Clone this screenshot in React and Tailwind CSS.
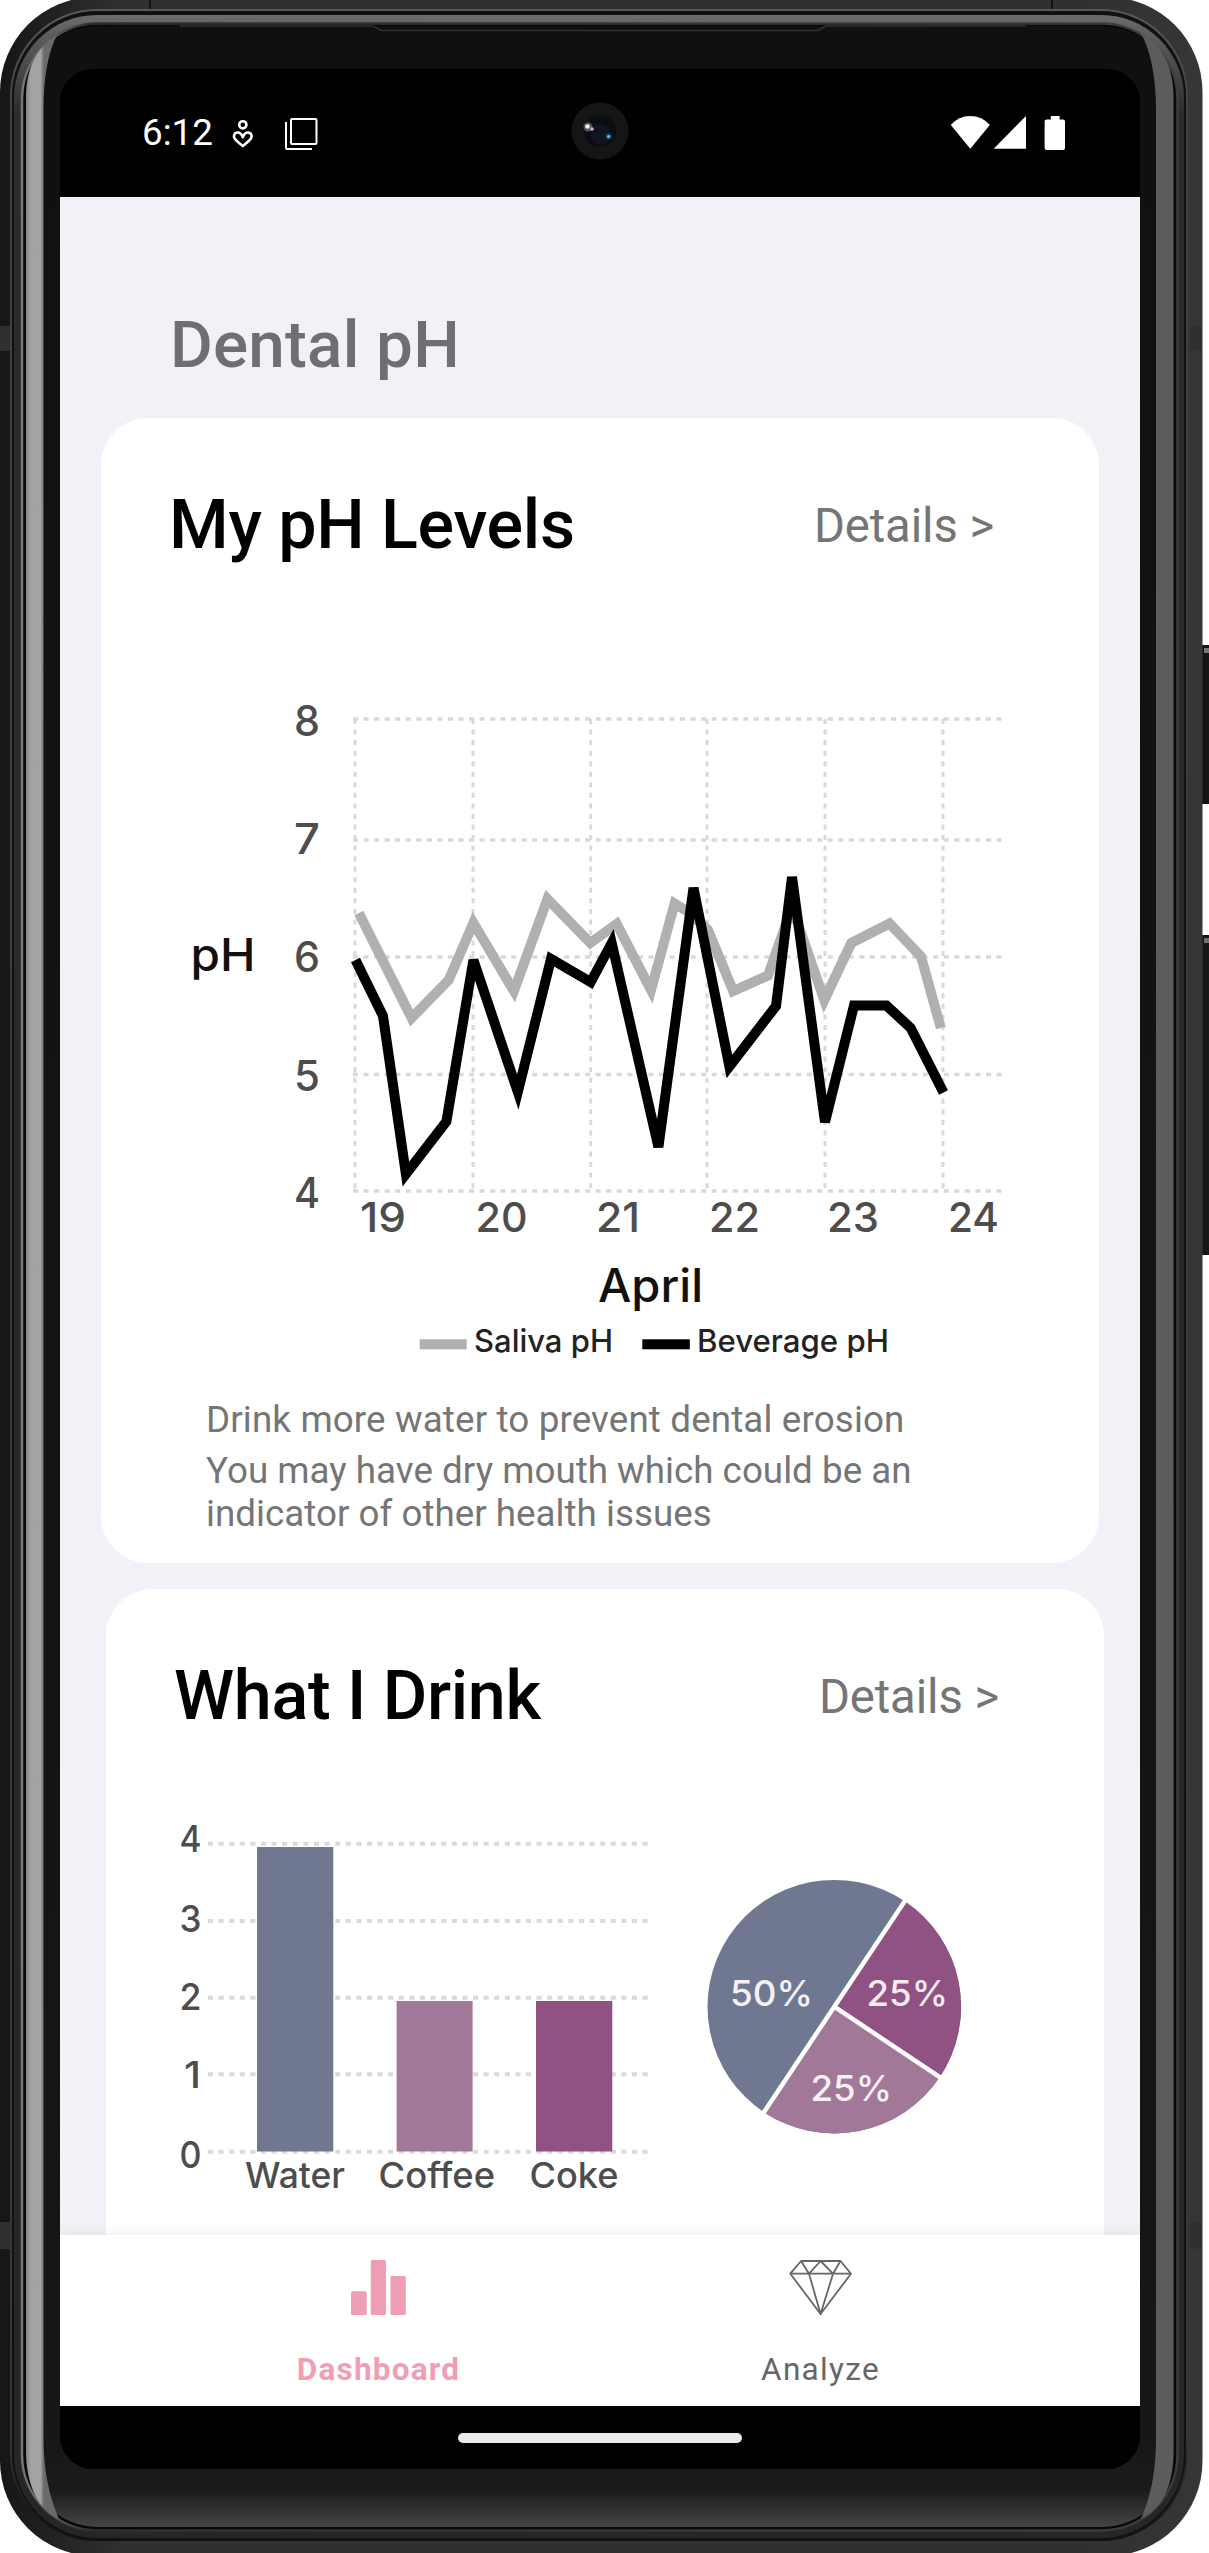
import React from "react";

const SALIVA =
  "358.8,913 411.6,1018 448.7,980 473.4,923 513.9,991 547.5,899 590.3,943 616.7,924 651,990 674.6,903.5 690,913 708,930 733.2,991 768,975.5 792,907 824.3,1000 851.3,943 889.5,923.5 921,956.5 940.8,1028";
const BEVERAGE =
  "355.5,960 383,1016 405.9,1174 446.4,1121.5 473.4,960 517.8,1092 551,959 590.7,982 611.7,943 658.4,1147 693.5,888 729.4,1066.5 776,1006 792,877 825,1122 854,1005.5 886.4,1005.5 910.7,1028 943.5,1092.5";

function Label({ x, y, w, size, fill, weight = 450, children }) {
  return (
    <text
      x={x}
      y={y}
      textLength={w}
      lengthAdjust="spacingAndGlyphs"
      fontSize={size}
      fill={fill}
      fontWeight={weight}
      fontFamily="Inter, sans-serif"
    >
      {children}
    </text>
  );
}

function PhoneBody() {
  return (
    <svg className="absolute inset-0" width="1209" height="2553" viewBox="0 0 1209 2553" fill="none" aria-hidden="true">
      <defs>
        <linearGradient id="shell" x1="0" x2="1" y1="0" y2="0">
          <stop offset="0" stopColor="#161616" />
          <stop offset="0.02" stopColor="#1b1b1b" />
          <stop offset="0.1" stopColor="#303030" />
          <stop offset="0.9" stopColor="#303030" />
          <stop offset="1" stopColor="#363636" />
        </linearGradient>
        <linearGradient id="rim" x1="0" x2="0" y1="0" y2="1">
          <stop offset="0" stopColor="#585858" />
          <stop offset="0.04" stopColor="#404040" />
          <stop offset="0.96" stopColor="#363636" />
          <stop offset="1" stopColor="#101010" />
        </linearGradient>
        <linearGradient id="ring" x1="0" x2="0" y1="0" y2="1">
          <stop offset="0" stopColor="#6c6c6c" />
          <stop offset="0.006" stopColor="#606060" />
          <stop offset="0.04" stopColor="#2b2b2b" />
          <stop offset="1" stopColor="#262626" />
        </linearGradient>
        <linearGradient id="edge" x1="0" x2="1" y1="0" y2="0">
          <stop offset="0" stopColor="#777" />
          <stop offset="0.06" stopColor="#2e2e2e" />
          <stop offset="1" stopColor="#3d3d3d" />
        </linearGradient>
        <linearGradient id="glass" x1="0" x2="0" y1="25" y2="2528" gradientUnits="userSpaceOnUse">
          <stop offset="0" stopColor="#101010" />
          <stop offset="0.96" stopColor="#161616" />
          <stop offset="0.985" stopColor="#1b1b1b" />
          <stop offset="1" stopColor="#464646" />
        </linearGradient>
        <linearGradient id="glareL" x1="26" x2="44" y1="0" y2="0" gradientUnits="userSpaceOnUse">
          <stop offset="0" stopColor="#858585" />
          <stop offset="0.25" stopColor="#a2a2a2" />
          <stop offset="0.8" stopColor="#a4a4a4" />
          <stop offset="1" stopColor="#6a6a6a" />
        </linearGradient>
      </defs>
      <rect x="1198" y="645" width="14" height="159" rx="3" fill="#151515" />
      <rect x="1204" y="648" width="5" height="5" fill="#777" />
      <rect x="1198" y="935" width="14" height="320" rx="3" fill="#171717" />
      <rect x="1204" y="938" width="5" height="5" fill="#707070" />
      <rect x="0" y="-3" width="1202.5" height="2559" rx="95" fill="url(#shell)" />
      <path d="M0 326h11v25H0zM1190 326h12v25h-12zM0 2222h11v27H0zM1190 2222h12v27h-12z" fill="#303030" />
      <path d="M150 0v9M1052 0v11" stroke="#141414" strokeWidth="2" />
      <rect x="11" y="10" width="1176" height="2530" rx="86" fill="#111" stroke="url(#rim)" strokeWidth="2" />
      <rect x="14" y="15" width="1170" height="2523" rx="83" fill="url(#ring)" />
      <rect x="22" y="23.5" width="1155.5" height="2507" rx="76" fill="#080808" stroke="url(#edge)" strokeWidth="2.5" />
      <rect x="26" y="26" width="1148" height="2501" rx="72" fill="url(#glass)" />
      <path
        d="M57 35C36 47 26 70 26 98V2450C26 2482 36 2508 59 2519C49 2496 43.500 2470 43.500 2438V110C43.500 78 48 52 57 35Z"
        fill="url(#glareL)"
      />
      <path
        d="M1141 33C1163 45 1173.500 68 1173.500 96V2450C1173.500 2482 1165 2508 1141 2519C1151 2496 1156 2470 1156 2438V110C1156 78 1151 52 1141 33Z"
        fill="#5c5c5c"
      />
      <path d="M180 26H373l8 4.500H818l8-4.500h200" stroke="#303030" strokeWidth="1.500" />
    </svg>
  );
}

function StatusBar() {
  return (
    <div className="relative flex h-[128px] items-start bg-black pl-[82px] text-white">
      <span className="mt-[46px] w-[72px] text-[36.75px] leading-none whitespace-nowrap">6:12</span>
      <svg className="mt-[49px] ml-[16px] shrink-0" width="26" height="32" viewBox="230 118 26 32" fill="none" stroke="#fff" strokeWidth="2.600">
        <circle cx="242.800" cy="124.800" r="3.600" />
        <path d="M242.800 137.200C241 132.600 238.500 132.300 237 132.600C233.800 133.200 233.200 136.400 234.800 138.800C236.500 141.300 239.500 143.200 242.800 145.900C246.100 143.200 249.100 141.300 250.800 138.800C252.400 136.400 251.800 133.200 248.600 132.600C247.100 132.300 244.600 132.600 242.800 137.200Z" strokeLinejoin="round" />
      </svg>
      <svg className="mt-[47px] ml-[27px] shrink-0" width="36" height="36" viewBox="283 116 36 36" fill="none" stroke="#fff" strokeWidth="2">
        <rect x="291" y="119" width="25.500" height="25" rx="1" />
        <path d="M286 122v26a1 1 0 0 0 1 1h25" />
      </svg>
      <svg className="absolute top-[33px] left-[511px]" width="58" height="58" viewBox="571 102 58 58" aria-hidden="true">
        <circle cx="600" cy="131" r="28.500" fill="#151515" />
        <circle cx="600" cy="131" r="16" fill="#0b0d14" />
        <circle cx="601" cy="134" r="10" fill="#11151f" />
        <circle cx="588" cy="127" r="4.500" fill="#4e565c" />
        <circle cx="587.500" cy="126.500" r="2.200" fill="#f0fff0" />
        <circle cx="592" cy="129" r="1.800" fill="#d9a0d8" />
        <circle cx="608.600" cy="136.500" r="3.500" fill="#0d3055" />
        <circle cx="608.600" cy="136.500" r="1.700" fill="#5ab4f5" />
      </svg>
      <svg className="mt-[45px] ml-auto mr-[73px] shrink-0" width="118" height="38" viewBox="949 114 118 38" fill="#fff">
        <path d="M970.300 148.700L950.800 125Q958.500 116 970.300 116T989.800 125Z" />
        <path d="M993.700 148.700H1026V116Z" />
        <path d="M1050.800 116h8.800v3.500h3.400a2 2 0 0 1 2 2v26.500a2 2 0 0 1-2 2h-16.400a2 2 0 0 1-2-2v-26.500a2 2 0 0 1 2-2h4.200z" />
      </svg>
    </div>
  );
}

function CardHeader({ title }) {
  return (
    <div className="flex h-[142px] items-start justify-between pt-[73px] pr-[105px] pl-[68px]">
      <h2 className="text-[68.25px] leading-none font-medium tracking-[-0.3px] whitespace-nowrap text-black">{title}</h2>
      <span className="mt-[12px] text-[47.25px] leading-none tracking-[-0.1px] whitespace-nowrap text-[#757575]">Details &gt;</span>
    </div>
  );
}

function LevelsChart() {
  const rows = [
    ["8", 719, 736],
    ["7", 840, 854],
    ["6", 957, 971.5],
    ["5", 1074.5, 1090.5],
    ["4", 1191, 1208],
  ];
  const cols = [
    ["19", 355, 360, 46],
    ["20", 473, 475.5, 52],
    ["21", 590.7, 596, 44],
    ["22", 707, 709, 51],
    ["23", 825, 827, 52],
    ["24", 943, 948, 51],
  ];
  return (
    <svg className="mt-[120px] block" width="998" height="700" viewBox="101 680 998 700" fill="none">
      <g stroke="#d9d9d9" strokeWidth="3.500" strokeDasharray="5 5.550">
        {rows.map(([n, y]) => (
          <path key={n} d={`M353 ${y}H1005`} />
        ))}
        {cols.map(([n, x]) => (
          <path key={n} d={`M${x} 719V1193`} strokeWidth="3" />
        ))}
      </g>
      {rows.map(([n, , y]) => (
        <Label key={n} x={294} y={y} w={26} size={42} fill="#4d4d4d">{n}</Label>
      ))}
      {cols.map(([n, , x, w]) => (
        <Label key={n} x={x} y={1231.5} w={w} size={41.5} fill="#4d4d4d">{n}</Label>
      ))}
      <polyline points={SALIVA} stroke="#b0b0b0" strokeWidth="10" />
      <polyline points={BEVERAGE} stroke="#000" strokeWidth="10" />
      <Label x={190.5} y={971} w={65} size={45} weight={500} fill="#111">pH</Label>
      <Label x={598} y={1302} w={105} size={46} weight={500} fill="#111">April</Label>
      <rect x="419.700" y="1339.300" width="47" height="10" fill="#b0b0b0" />
      <Label x={474} y={1352} w={139} size={31.5} fill="#222">Saliva pH</Label>
      <rect x="642.300" y="1339.300" width="47.500" height="10" fill="#000" />
      <Label x={697} y={1352} w={192} size={31.5} fill="#222">Beverage pH</Label>
    </svg>
  );
}

function DrinksChart() {
  const rows = [
    ["4", 1843.7, 1852],
    ["3", 1921, 1931.5],
    ["2", 1997.7, 2009.7],
    ["1", 2074.3, 2088],
    ["0", 2151.7, 2167.5],
  ];
  return (
    <svg className="mt-[69px] block" width="998" height="400" viewBox="106 1800 998 400" fill="none">
      {rows.map(([n, y, base]) => (
        <g key={n}>
          <path d={`M208 ${y}H653`} stroke="#dadada" strokeWidth="4" strokeDasharray="5 5.600" />
          <Label x={n === "1" ? 184 : 179.5} y={base} w={n === "1" ? 17 : 22} size={36.5} fill="#4d4d4d">{n}</Label>
        </g>
      ))}
      <rect x="257" y="1847" width="76.300" height="304.500" fill="#707891" />
      <rect x="396.600" y="2001" width="76" height="150.500" fill="#a27899" />
      <rect x="536" y="2001" width="76.300" height="150.500" fill="#8f5282" />
      <Label x={245} y={2188} w={100} size={35.5} fill="#4d4d4d">Water</Label>
      <Label x={378.5} y={2188} w={116.5} size={35.5} fill="#4d4d4d">Coffee</Label>
      <Label x={529.5} y={2188} w={89} size={35.5} fill="#4d4d4d">Coke</Label>
      <circle cx="834.300" cy="2006.700" r="126.800" fill="#707891" />
      <path d="M834.300 2006.700L904.600 1901.200A126.800 126.800 0 0 1 939.700 2077.100Z" fill="#8f5282" />
      <path d="M834.300 2006.700L939.700 2077.100A126.800 126.800 0 0 1 764 2112.200Z" fill="#a27899" />
      <path d="M906.200 1899L762.400 2114.400M834.300 2006.700L942 2078.600" stroke="#fff" strokeWidth="4.500" />
      <Label x={730} y={2006.3} w={83} size={36} fill="#f4f0f5">50%</Label>
      <Label x={866.5} y={2006.3} w={81.5} size={36} fill="#f4eaf2">25%</Label>
      <Label x={810.5} y={2101.3} w={81.5} size={36} fill="#f7f0f5">25%</Label>
    </svg>
  );
}

function NavBar() {
  return (
    <nav className="relative z-10 flex h-[171px] bg-white px-[85px] shadow-[0_0_12px_rgba(0,0,0,0.09)]">
      <div className="flex w-[467px] flex-col items-center pt-[22px]">
        <svg width="63" height="63" viewBox="347 2257 63 63" fill="#ef9fb3">
          <rect x="351" y="2291.300" width="15.700" height="23.700" rx="1.500" />
          <rect x="370.800" y="2260" width="15.200" height="55" rx="1.500" />
          <rect x="390.400" y="2276" width="15.400" height="39" rx="1.500" />
        </svg>
        <span className="mt-[33.500px] text-[31.5px] leading-none font-bold tracking-[1.2px] text-[#ef9fb3]">Dashboard</span>
      </div>
      <div className="flex w-[416px] flex-col items-center pt-[22px]">
        <svg width="63" height="63" viewBox="788.700 2257 63 63" fill="none" stroke="#666" strokeWidth="1.800" strokeLinejoin="round">
          <path d="M800.800 2261H840.200L850.700 2273.700L820.300 2314L790 2273.700Z" />
          <path d="M790 2273.700H850.700M800.800 2261L808.700 2273.700L820.300 2261L832.700 2273.700L840.200 2261M808.700 2273.700L820.300 2314L832.700 2273.700" />
        </svg>
        <span className="mt-[33.500px] pl-[1px] text-[31.5px] leading-none tracking-[1.3px] text-[#666]">Analyze</span>
      </div>
    </nav>
  );
}

export default function App() {
  return (
    <div className="relative h-[2553px] w-[1209px] overflow-hidden bg-white pt-[69px] pl-[60px] font-[Roboto,sans-serif]">
      <PhoneBody />
      <div className="relative flex h-[2400px] w-[1080px] flex-col overflow-hidden rounded-[33px] bg-black">
        <StatusBar />
        <main className="h-[2038px] overflow-hidden bg-[#f2f1f7] pt-[115px]">
          <h1 className="ml-[110px] h-[66px] text-[65.6px] leading-none font-medium tracking-[0.2px] text-[#6f6f71]">Dental pH</h1>
          <section className="mt-[40px] ml-[41px] h-[1145px] w-[998px] rounded-[47px] bg-white">
            <CardHeader title="My pH Levels" />
            <LevelsChart />
            <div className="flex flex-col gap-[8px] pt-[18px] pl-[105px] text-[36.75px] leading-[43px] text-[#757575]">
              <p className="tracking-[0.14px]">Drink more water to prevent dental erosion</p>
              <p className="w-[740px] tracking-[0.02px]">You may have dry mouth which could be an indicator of other health issues</p>
            </div>
          </section>
          <section className="mt-[26px] ml-[46px] h-[700px] w-[998px] rounded-[47px] bg-white">
            <CardHeader title="What I Drink" />
            <DrinksChart />
          </section>
        </main>
        <NavBar />
        <div className="flex h-[63px] justify-center bg-black pt-[27px]">
          <div className="h-[10px] w-[284px] rounded-full bg-[#ebebeb]" />
        </div>
      </div>
    </div>
  );
}
